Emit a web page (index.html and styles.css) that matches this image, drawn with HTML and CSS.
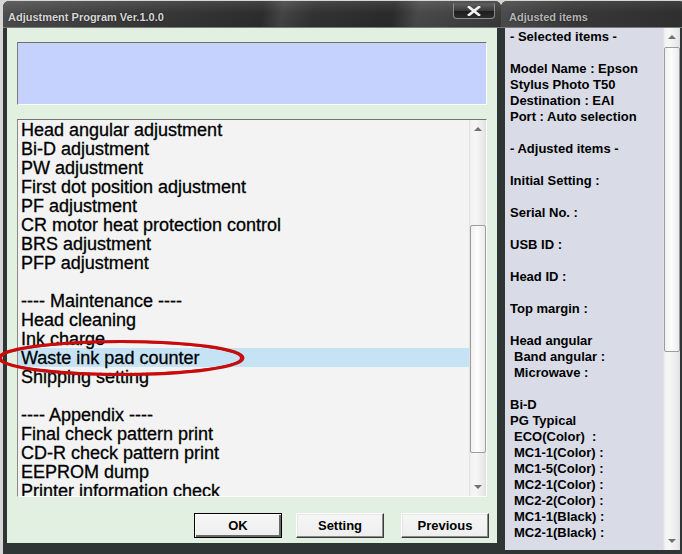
FILE: index.html
```html
<!DOCTYPE html>
<html>
<head>
<meta charset="utf-8">
<title>Adjustment Program</title>
<link rel="stylesheet" href="styles.css">
</head>
<body>
<div class="desk">
  <div class="win main">
    <div class="titlebar">
      <span class="title">Adjustment Program Ver.1.0.0</span>
      <div class="close">
        <svg width="14" height="10" viewBox="0 0 14 10"><path d="M2 1 L12 9 M12 1 L2 9" stroke="#f2f2f2" stroke-width="2.6" stroke-linecap="square"/></svg>
      </div>
    </div>
    <div class="client">
      <div class="infobox"></div>
      <div class="listbox">
        <div class="items">
          <div class="item">Head angular adjustment</div>
          <div class="item">Bi-D adjustment</div>
          <div class="item">PW adjustment</div>
          <div class="item">First dot position adjustment</div>
          <div class="item">PF adjustment</div>
          <div class="item">CR motor heat protection control</div>
          <div class="item">BRS adjustment</div>
          <div class="item">PFP adjustment</div>
          <div class="item">&nbsp;</div>
          <div class="item">---- Maintenance ----</div>
          <div class="item">Head cleaning</div>
          <div class="item">Ink charge</div>
          <div class="item selected">Waste ink pad counter</div>
          <div class="item">Shipping setting</div>
          <div class="item">&nbsp;</div>
          <div class="item">---- Appendix ----</div>
          <div class="item">Final check pattern print</div>
          <div class="item">CD-R check pattern print</div>
          <div class="item">EEPROM dump</div>
          <div class="item">Printer information check</div>
        </div>
        <div class="vscroll list-scroll">
          <div class="arrow up"></div>
          <div class="thumb"></div>
          <div class="arrow down"></div>
        </div>
      </div>
      <div class="buttons">
        <div class="btn default">OK</div>
        <div class="btn">Setting</div>
        <div class="btn prev">Previous</div>
      </div>
    </div>
  </div>
  <div class="win side">
    <div class="titlebar side-title">
      <span class="title dim">Adjusted items</span>
    </div>
    <div class="side-client">
      <div class="report">
        <div class="ln">- Selected items -</div>
        <div class="ln">&nbsp;</div>
        <div class="ln">Model Name : Epson</div>
        <div class="ln">Stylus Photo T50</div>
        <div class="ln">Destination : EAI</div>
        <div class="ln">Port : Auto selection</div>
        <div class="ln">&nbsp;</div>
        <div class="ln">- Adjusted items -</div>
        <div class="ln">&nbsp;</div>
        <div class="ln">Initial Setting :</div>
        <div class="ln">&nbsp;</div>
        <div class="ln">Serial No. :</div>
        <div class="ln">&nbsp;</div>
        <div class="ln">USB ID :</div>
        <div class="ln">&nbsp;</div>
        <div class="ln">Head ID :</div>
        <div class="ln">&nbsp;</div>
        <div class="ln">Top margin :</div>
        <div class="ln">&nbsp;</div>
        <div class="ln">Head angular</div>
        <div class="ln ind">Band angular :</div>
        <div class="ln ind">Microwave :</div>
        <div class="ln">&nbsp;</div>
        <div class="ln">Bi-D</div>
        <div class="ln">PG Typical</div>
        <div class="ln ind">ECO(Color)  :</div>
        <div class="ln ind">MC1-1(Color) :</div>
        <div class="ln ind">MC1-5(Color) :</div>
        <div class="ln ind">MC2-1(Color) :</div>
        <div class="ln ind">MC2-2(Color) :</div>
        <div class="ln ind">MC1-1(Black) :</div>
        <div class="ln ind">MC2-1(Black) :</div>
      </div>
      <div class="vscroll side-scroll">
        <div class="arrow up"></div>
        <div class="thumb"></div>
        <div class="arrow down"></div>
      </div>
    </div>
  </div>
</div>
<svg class="mark" width="252" height="44" viewBox="0 0 252 44">
  <ellipse cx="124" cy="21" rx="122" ry="16.5" fill="none" stroke="#c80c0c" stroke-width="3"/>
  <ellipse cx="124" cy="21" rx="120" ry="16" fill="none" stroke="#c80c0c" stroke-width="2"/>
</svg>
</body>
</html>
```

FILE: styles.css
```css
* { box-sizing: border-box; }
html, body { margin: 0; padding: 0; }
body {
  width: 682px;
  height: 554px;
  overflow: hidden;
  position: relative;
  background: #d6d6d6;
  font-family: "Liberation Sans", Arial, sans-serif;
  color: #000;
}
.desk {
  display: flex;
  height: 554px;
  padding: 1px 0 0 3px;
}
.win {
  background: #2f3535;
  border-radius: 6px 6px 0 0;
  display: flex;
  flex-direction: column;
  flex-shrink: 0;
}
.main { width: 498px; }
.side { width: 184px; }

.titlebar {
  height: 27px;
  position: relative;
  border-radius: 6px 6px 0 0;
  border-bottom: 1px solid #7a7a7a;
  background:
    linear-gradient(to bottom, rgba(255,255,255,0.10), rgba(255,255,255,0) 45%, rgba(0,0,0,0.08)),
    linear-gradient(100deg, #4f4f4f 0%, #3c3c3c 25%, #2d2d2d 52%, #454545 56%, #333 62%, #2b2b2b 78%, #4a4a4a 83%, #3b3b3b 100%);
  padding: 10px 0 0 5px;
  font-size: 11px;
  line-height: 12px;
}
.title {
  font: bold 11px/12px "Liberation Sans", Arial, sans-serif;
  color: #d6d6d6;
  text-shadow: 0 0 2px rgba(0,0,0,0.6);
}
.title.dim { color: #b4b4b4; }
.side-title {
  padding-left: 8px;
  background:
    linear-gradient(to bottom, rgba(255,255,255,0.08), rgba(255,255,255,0) 45%),
    linear-gradient(100deg, #4c4c4c 0%, #383838 40%, #2e2e2e 100%);
}
.close {
  position: absolute;
  right: 6px;
  top: 2px;
  width: 42px;
  height: 16px;
  border: 1px solid #8c8c8c;
  border-top-color: #5a5a5a;
  border-radius: 0 0 4px 4px;
  background: linear-gradient(to bottom, #5e5e5e 0%, #3a3a3a 48%, #1e1e1e 52%, #2c2c2c 100%);
  display: flex;
  align-items: center;
  justify-content: center;
}

.client {
  margin: 0 4px;
  height: 515px;
  background: #e2f0e2;
  padding: 14px 10px 0 10px;
  display: flex;
  flex-direction: column;
}
.infobox {
  height: 63px;
  background: #c6d2fe;
  border: 1px solid;
  border-color: #6e6e6e #ffffff #ffffff #7c7c7c;
}
.listbox {
  margin-top: 14px;
  height: 378px;
  background: #f3f3f3;
  border: 1px solid;
  border-color: #747474 #ffffff #ffffff #8a8a8a;
  display: flex;
  overflow: hidden;
}
.items {
  flex: 1;
  overflow: hidden;
  font-size: 18px;
  line-height: 19px;
  white-space: nowrap;
  -webkit-text-stroke: 0.3px #000;
}
.item { height: 19px; padding: 1px 0 0 3px; }
.item.selected { background: #c5e3f5; }

.vscroll {
  width: 17px;
  flex-shrink: 0;
  position: relative;
  display: flex;
  flex-direction: column;
  align-items: center;
  background: linear-gradient(to right, #dcdcdc 0px, #f3f3f3 2px, #f6f6f6 40%, #e9e9e9 85%, #dedede 100%);
}
.arrow {
  width: 0;
  height: 0;
  border-left: 4px solid transparent;
  border-right: 4px solid transparent;
}
.arrow.up { border-bottom: 4px solid #707070; margin-top: 7px; }
.arrow.down { border-top: 4px solid #707070; margin-top: auto; margin-bottom: 7px; }
.thumb {
  width: 16px;
  border: 1px solid #9c9c9c;
  border-radius: 2px;
  background: linear-gradient(to right, #f0f0f0, #fdfdfd 45%, #ebebeb);
}
.list-scroll .thumb { margin-top: 94px; height: 228px; }
.side-scroll .thumb { margin-top: 8px; height: 305px; }

.buttons {
  margin-top: 16px;
  height: 25px;
  display: flex;
  justify-content: flex-end;
  gap: 14px;
  margin-right: -2px;
}
.btn {
  width: 88px;
  height: 25px;
  background: linear-gradient(to bottom, #f6f6f6, #eeeeee);
  border: 1px solid;
  border-color: #ffffff #3c3c3c #3c3c3c #ffffff;
  box-shadow: inset -1px -1px 0 #8a8a8a, inset 1px 1px 0 #e6e6e6;
  font-weight: bold;
  font-size: 13px;
  display: flex;
  align-items: center;
  justify-content: center;
}
.btn.default {
  border-color: #000;
  box-shadow: inset 1px 1px 0 #fff, inset -2px -2px 0 #6a6a6a;
}
.btn.prev { margin-left: 3px; }

.side-client {
  margin-left: 4px;
  width: 175px;
  height: 522px;
  background: #d9dce6;
  display: flex;
}
.report {
  flex: 1;
  overflow: hidden;
  padding: 1px 0 0 5px;
  font-weight: bold;
  font-size: 13px;
  line-height: 16px;
}
.ln { height: 16px; white-space: pre; }
.ln.ind { padding-left: 4px; }

.mark {
  position: absolute;
  left: -3px;
  top: 337px;
}
```
